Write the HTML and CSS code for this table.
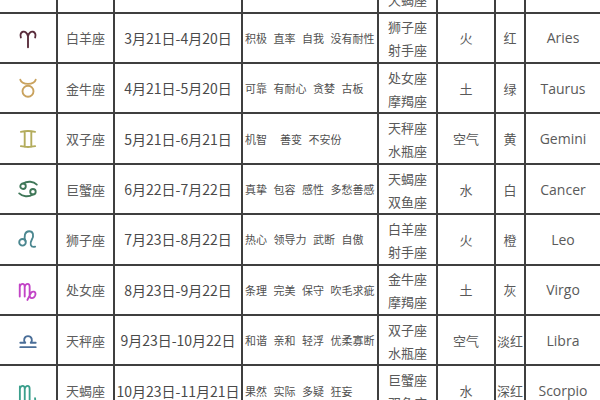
FILE: index.html
```html
<!DOCTYPE html>
<html lang="zh">
<head>
<meta charset="utf-8">
<title>星座表</title>
<link rel="stylesheet" href="styles.css">
</head>
<body>
<div class="zodiac">
  <div class="cell sym"></div><div class="cell name"></div><div class="cell date"></div><div class="cell traits"></div>
  <div class="cell match"><span>巨蟹座</span><span>天蝎座</span></div><div class="cell elem"></div><div class="cell clr"></div><div class="cell en"></div>

  <div class="cell sym aries"><svg viewBox="0 0 20 20"><path d="M3.5 9.5C1.5 4 8.5 1.5 10 8.5L10 18.5M10 8.5C11.5 1.5 18.5 4 16.5 9.5"/></svg></div>
  <div class="cell name">白羊座</div><div class="cell date">3月21日-4月20日</div>
  <div class="cell traits">积极 直率 自我 没有耐性</div>
  <div class="cell match"><span>狮子座</span><span>射手座</span></div>
  <div class="cell elem">火</div><div class="cell clr">红</div><div class="cell en">Aries</div>

  <div class="cell sym taurus"><svg viewBox="0 0 20 20"><circle cx="10" cy="13" r="5"/><path d="M3 2.5C4.5 7.5 15.5 7.5 17 2.5"/></svg></div>
  <div class="cell name">金牛座</div><div class="cell date">4月21日-5月20日</div>
  <div class="cell traits">可靠 有耐心 贪婪 古板</div>
  <div class="cell match"><span>处女座</span><span>摩羯座</span></div>
  <div class="cell elem">土</div><div class="cell clr">绿</div><div class="cell en">Taurus</div>

  <div class="cell sym gemini"><svg viewBox="0 0 20 20"><path d="M3.5 3.5C8 2.5 12 2.5 16.5 3.5M3.5 16.5C8 17.5 12 17.5 16.5 16.5M7 3L7 17M13 3L13 17"/></svg></div>
  <div class="cell name">双子座</div><div class="cell date">5月21日-6月21日</div>
  <div class="cell traits">机智&nbsp; 善变 不安份</div>
  <div class="cell match"><span>天秤座</span><span>水瓶座</span></div>
  <div class="cell elem">空气</div><div class="cell clr">黄</div><div class="cell en">Gemini</div>

  <div class="cell sym cancer"><svg viewBox="0 0 20 20"><circle cx="5.5" cy="7.5" r="2.5"/><path d="M5.5 5C9.5 2.5 15 3 18 6"/><circle cx="14.5" cy="12.5" r="2.5"/><path d="M14.5 15C10.5 17.5 5 17 2 14"/></svg></div>
  <div class="cell name">巨蟹座</div><div class="cell date">6月22日-7月22日</div>
  <div class="cell traits">真挚 包容 感性 多愁善感</div>
  <div class="cell match"><span>天蝎座</span><span>双鱼座</span></div>
  <div class="cell elem">水</div><div class="cell clr">白</div><div class="cell en">Cancer</div>

  <div class="cell sym leo"><svg viewBox="0 0 20 20"><circle cx="5" cy="13" r="3"/><path d="M7.8 12C6 8 7 3 11 3C15 3 15.5 7 13.5 10.5C11.5 14 12 18 16.5 17"/></svg></div>
  <div class="cell name">狮子座</div><div class="cell date">7月23日-8月22日</div>
  <div class="cell traits">热心 领导力 武断 自傲</div>
  <div class="cell match"><span>白羊座</span><span>射手座</span></div>
  <div class="cell elem">火</div><div class="cell clr">橙</div><div class="cell en">Leo</div>

  <div class="cell sym virgo"><svg viewBox="0 0 20 20"><path d="M2.5 5L2.5 16M2.5 7C3.5 3.5 7 3.5 7 7L7 16M7 7C8 3.5 11.5 3.5 11.5 7L11.5 15C11.5 18 15 18.5 16.5 15C18 11 13.5 10 12 14L9.5 19"/></svg></div>
  <div class="cell name">处女座</div><div class="cell date">8月23日-9月22日</div>
  <div class="cell traits">条理 完美 保守 吹毛求疵</div>
  <div class="cell match"><span>金牛座</span><span>摩羯座</span></div>
  <div class="cell elem">土</div><div class="cell clr">灰</div><div class="cell en">Virgo</div>

  <div class="cell sym libra"><svg viewBox="0 0 20 20"><path d="M3 16.5L17 16.5M3 12.5L7.5 12.5C5.5 10.5 6.5 6.5 10 6.5C13.5 6.5 14.5 10.5 12.5 12.5L17 12.5"/></svg></div>
  <div class="cell name">天秤座</div><div class="cell date">9月23日-10月22日</div>
  <div class="cell traits">和谐 亲和 轻浮 优柔寡断</div>
  <div class="cell match"><span>双子座</span><span>水瓶座</span></div>
  <div class="cell elem">空气</div><div class="cell clr">淡红</div><div class="cell en">Libra</div>

  <div class="cell sym scorpio"><svg viewBox="0 0 20 24"><path d="M2.5 6L2.5 19M2.5 8C3.5 4.5 7 4.5 7 8L7 19M7 8C8 4.5 11.5 4.5 11.5 8L11.5 19C11.5 21.5 14 22 16.5 20M13.5 19.5L16.8 20L16.5 16.8"/></svg></div>
  <div class="cell name">天蝎座</div><div class="cell date">10月23日-11月21日</div>
  <div class="cell traits">果然 实际 多疑 狂妄</div>
  <div class="cell match"><span>巨蟹座</span><span>双鱼座</span></div>
  <div class="cell elem">水</div><div class="cell clr">深红</div><div class="cell en">Scorpio</div>
</div>
</body>
</html>
```
FILE: styles.css
```css
html, body {
  margin: 0;
  padding: 0;
  background: #fff;
  width: 600px;
  height: 400px;
  overflow: hidden;
}

.zodiac {
  display: grid;
  grid-template-columns: 56px 55px 126px 134px 57px 56px 28px 74px;
  grid-auto-rows: 48.4px;
  gap: 2px;
  background: #3f3f3f;
  margin-top: -36.7px;
  font-family: "Noto Sans CJK SC", "Microsoft YaHei", sans-serif;
  color: #595959;
}

.cell {
  background: #fff;
  display: flex;
  align-items: center;
  justify-content: center;
  white-space: nowrap;
  overflow: visible;
  font-size: 13px;
}

.sym svg {
  width: 22px;
  height: 22px;
  fill: none;
  stroke: currentColor;
  stroke-width: 1.7;
  stroke-linecap: round;
  stroke-linejoin: round;
}

.scorpio svg {
  width: 22px;
  height: 26px;
  margin-top: 4px;
}

.aries { color: #5a2d3c; }
.taurus { color: #c9a25e; }
.gemini { color: #b3ac5c; }
.cancer { color: #3f7758; }
.leo { color: #4b8790; }
.virgo { color: #c244c6; }
.libra { color: #4a6e98; }
.scorpio { color: #3b9f8c; }

.name { font-size: 13px; color: #5c5c5c; }

.date { font-size: 14px; color: #4a4a4a; }

.traits {
  justify-content: flex-start;
  padding-left: 2px;
  font-size: 11px;
  word-spacing: 4px;
  color: #505050;
}

.match {
  flex-direction: column;
  line-height: 23px;
  font-size: 13px;
  padding-top: 1px;
}

.elem { font-size: 13px; }

.clr { font-size: 13px; }

.en {
  font-family: "Open Sans", "Liberation Sans", sans-serif;
  font-size: 14px;
  color: #5a5a5a;
}
```
